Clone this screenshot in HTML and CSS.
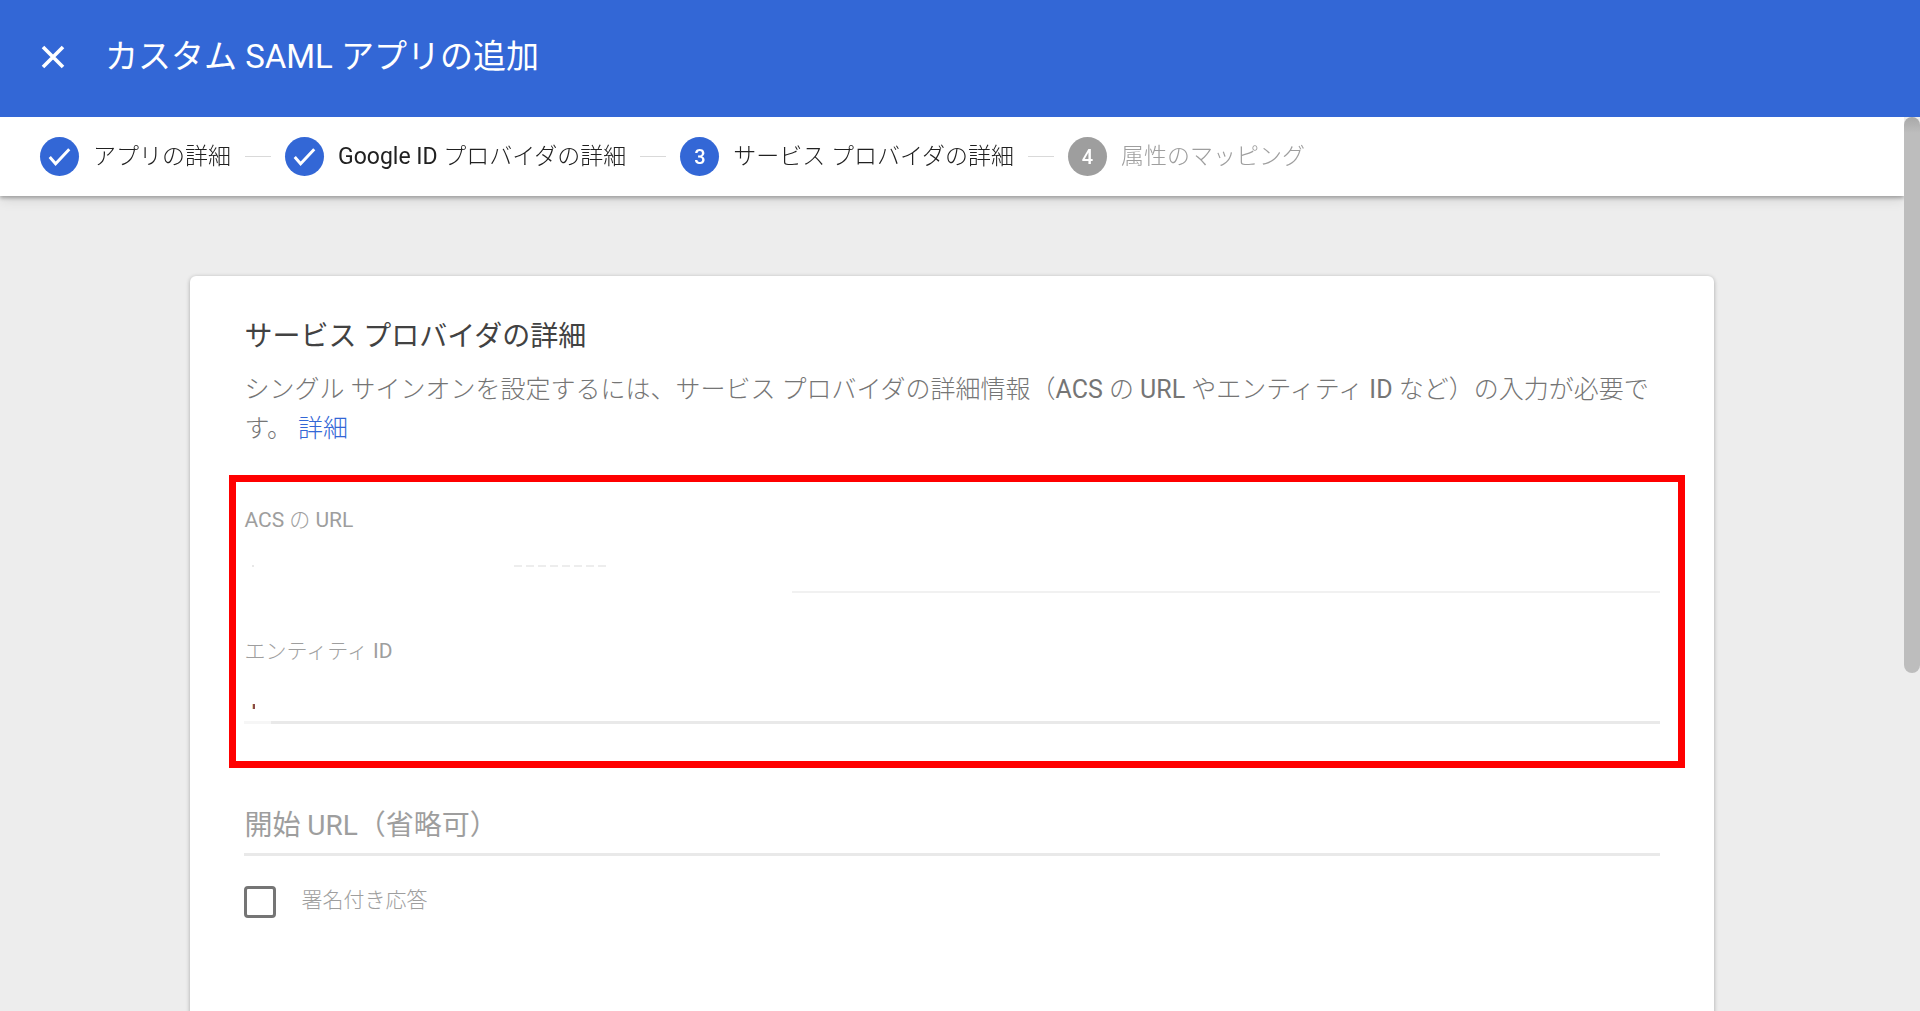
FILE: index.html
```html
<!DOCTYPE html>
<html lang="ja">
<head>
  <meta charset="UTF-8">
  <meta name="viewport" content="width=device-width, initial-scale=1.0">
  <title>カスタム SAML アプリの追加</title>
  <link rel="stylesheet" href="styles.css">
</head>
<body>

  <header class="topbar">
    <button class="close-button" type="button" aria-label="閉じる">
      <svg viewBox="0 0 24 24" width="24" height="24"><path d="M2 2L22 22M22 2L2 22" fill="none" stroke="#fff" stroke-width="3.6"/></svg>
    </button>
    <h1>カスタム SAML アプリの追加</h1>
  </header>

  <div class="workspace">
    <div class="scroller">
      <ol class="stepper">
        <li class="step done">
          <span class="step-badge"><svg viewBox="0 0 40 40" width="40" height="40"><path d="M10 20l6 7 14-15" fill="none" stroke="#fff" stroke-width="3"/></svg></span>
          <span class="step-label">アプリの詳細</span>
        </li>
        <li class="step done">
          <span class="step-badge"><svg viewBox="0 0 40 40" width="40" height="40"><path d="M10 20l6 7 14-15" fill="none" stroke="#fff" stroke-width="3"/></svg></span>
          <span class="step-label"><span class="latin">Google ID</span> プロバイダの詳細</span>
        </li>
        <li class="step current">
          <span class="step-badge">3</span>
          <span class="step-label">サービス プロバイダの詳細</span>
        </li>
        <li class="step upcoming">
          <span class="step-badge">4</span>
          <span class="step-label">属性のマッピング</span>
        </li>
      </ol>

      <main class="card">
        <h2>サービス プロバイダの詳細</h2>
        <p class="description">シングル サインオンを設定するには、サービス プロバイダの詳細情報（<span class="latin">ACS</span> の <span class="latin">URL</span> やエンティティ <span class="latin">ID</span> など）の入力が必要です。 <a href="#">詳細</a></p>

        <div class="highlight">
          <div class="field">
            <label for="acsUrl"><span class="latin">ACS</span> の <span class="latin">URL</span></label>
            <input class="masked-acs" type="text" id="acsUrl">
          </div>
          <div class="field">
            <label for="entityId">エンティティ <span class="latin">ID</span></label>
            <input class="masked-entity" type="text" id="entityId">
          </div>
        </div>

        <input class="start-url" type="text" aria-label="開始 URL（省略可）" placeholder="開始 URL（省略可）">

        <div class="check-row">
          <input type="checkbox" id="signedResponse">
          <label for="signedResponse">署名付き応答</label>
        </div>
      </main>
    </div>
    <div class="scrollbar"><div class="scrollbar-thumb"></div></div>
  </div>

</body>
</html>
```
FILE: styles.css
```css
* {
  box-sizing: border-box;
}

body {
  margin: 0;
  height: 100vh;
  display: flex;
  flex-direction: column;
  font-family: Roboto, "Noto Sans CJK JP", sans-serif;
  background: #ededed;
  color: #212121;
}

h1, h2, p, ol {
  margin: 0;
  padding: 0;
  font-weight: 400;
}

.latin {
  font-weight: 400;
}

.topbar {
  flex: none;
  display: flex;
  align-items: center;
  gap: 40px;
  height: 117px;
  padding: 0 41px 4px;
  background: #3367d6;
  color: #fff;
}

.topbar h1 {
  font-size: 33px;
  line-height: 48px;
}

.close-button {
  display: flex;
  padding: 0;
  border: 0;
  background: none;
  cursor: pointer;
}

.workspace {
  flex: 1;
  min-height: 0;
  display: flex;
}

.scroller {
  flex: 1;
  min-width: 0;
  overflow-y: auto;
  scrollbar-width: none;
}

.scrollbar {
  flex: none;
  width: 16px;
}

.scrollbar-thumb {
  height: 62.2%;
  border-radius: 8px;
  background: linear-gradient(#a8a8a8, #bdbdbd 16px);
}

/* Steps */
.stepper {
  position: sticky;
  top: 0;
  z-index: 1;
  display: flex;
  align-items: center;
  height: 79px;
  padding: 0 40px;
  list-style: none;
  background: #fff;
  box-shadow: 0 2px 4px rgba(0, 0, 0, 0.3), 0 4px 12px rgba(0, 0, 0, 0.1);
}

.step {
  display: flex;
  align-items: center;
  gap: 14px;
  font-size: 23px;
  line-height: 32px;
}

.step + .step {
  margin-left: 14px;
}

.step + .step::before {
  content: "";
  width: 26px;
  height: 1px;
  background: #d9d9d9;
}

.step-badge {
  display: flex;
  align-items: center;
  justify-content: center;
  width: 39px;
  height: 39px;
  border-radius: 50%;
  background: #3367d6;
  color: #fff;
  font-size: 20px;
  font-weight: 500;
}

.step-label {
  font-weight: 300;
}

.upcoming .step-badge {
  background: #9e9e9e;
}

.upcoming .step-label {
  color: #9e9e9e;
}

/* Card */
.card {
  width: 80%;
  min-height: 1063px;
  margin: 80px auto 98px;
  padding: 41px 54px;
  border-radius: 6px;
  background: #fff;
  box-shadow: 0 1px 4px rgba(0, 0, 0, 0.3);
}

.card h2 {
  font-size: 28px;
  line-height: 40px;
  color: #424242;
}

.description {
  margin-top: 13px;
  font-size: 25px;
  font-weight: 300;
  line-height: 39px;
  color: #757575;
}

.description a {
  color: #3367d6;
  text-decoration: none;
}

.highlight {
  margin: 27px -25px 0 -15px;
  padding: 22px 18px 37px 8px;
  border: 7px solid #f00;
}

.field + .field {
  margin-top: 42px;
}

.field label {
  display: block;
  font-size: 21px;
  font-weight: 300;
  line-height: 32px;
  color: #9e9e9e;
}

.field input,
.start-url {
  display: block;
  width: 100%;
  height: 57px;
  padding: 0;
  border: 0;
  background: none;
  font-family: inherit;
  font-size: 28px;
  outline: 0;
}

/* values are blanked out, only traces and part of the underline remain */
.field .masked-acs {
  background:
    linear-gradient(#e8e8e8, #e8e8e8) 8px 29px / 2px 2px no-repeat,
    repeating-linear-gradient(90deg, #ededed 0 8px, #fff 8px 12px) 270px 29px / 92px 2px no-repeat,
    linear-gradient(90deg, transparent 38.7%, #f1f1f1 38.7%) 0 100% / 100% 2px no-repeat;
}

.field .masked-entity {
  background:
    linear-gradient(90deg, #e8d9a8 50%, #8a4a4a 50%) 8px 37px / 3px 5px no-repeat,
    linear-gradient(90deg, #f6f6f6 27px, #e9e9e9 27px) 0 100% / 100% 3px no-repeat;
}

.start-url {
  height: 59px;
  margin-top: 29px;
  border-bottom: 3px solid #e9e9e9;
}

.start-url::placeholder {
  color: #9e9e9e;
}

.check-row {
  display: flex;
  gap: 25px;
  margin-top: 30px;
}

.check-row input {
  appearance: none;
  width: 32px;
  height: 32px;
  margin: 0;
  border: 3px solid #757575;
  border-radius: 4px;
}

.check-row label {
  font-size: 21px;
  font-weight: 300;
  line-height: 28px;
  color: #9e9e9e;
}
```
